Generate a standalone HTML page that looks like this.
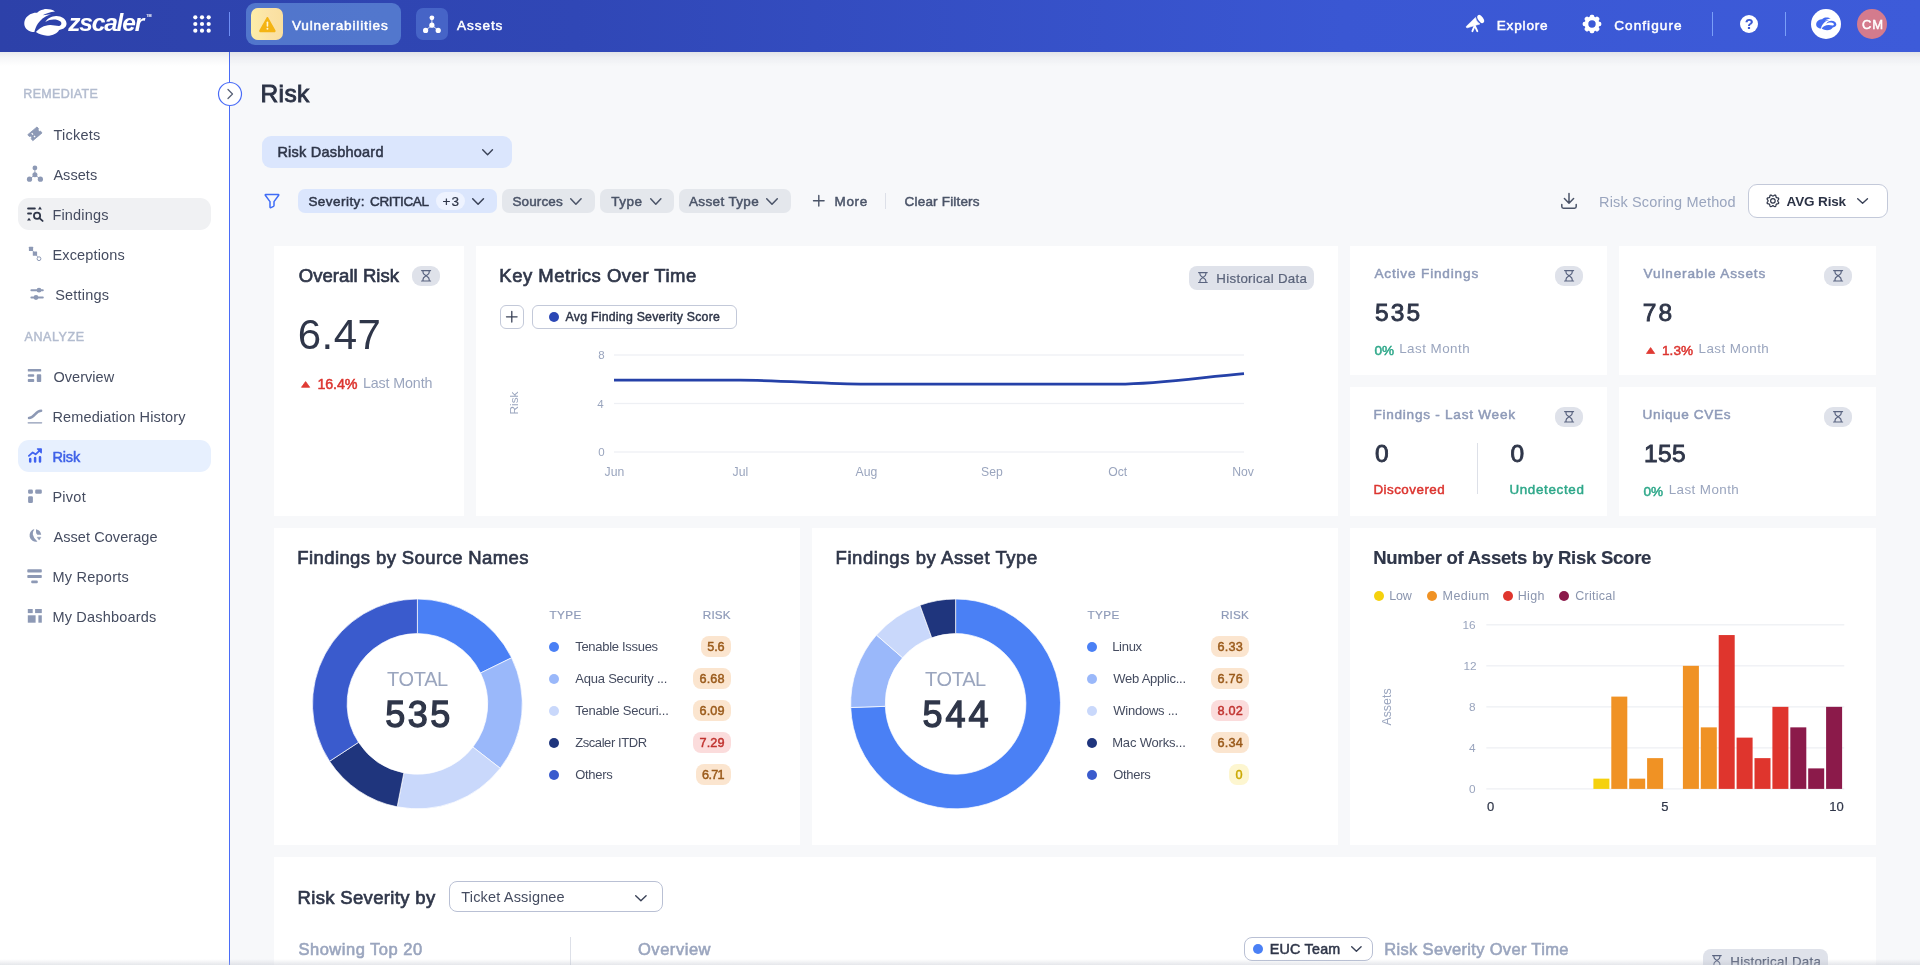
<!DOCTYPE html>
<html lang="en"><head><meta charset="utf-8"><title>Risk</title><style>
html,body{margin:0;padding:0}
body{width:1920px;height:965px;overflow:hidden;position:relative;background:#f7f8fa;font-family:"Liberation Sans", sans-serif;}
.t{position:absolute;white-space:nowrap;line-height:1}
.a{position:absolute}
svg{position:absolute;overflow:visible}
</style></head><body><div id="app" style="position:absolute;left:0;top:0;width:1920px;height:965px;will-change:transform;">
<div class="a" style="left:0px;top:52px;width:229px;height:913px;background:#ffffff;"></div>
<div class="a" style="left:229px;top:52px;width:1px;height:913px;background:#4a6cf7;"></div>
<div class="a" style="left:0;top:52px;width:1920px;height:14px;background:linear-gradient(to bottom,rgba(40,50,80,0.10),rgba(40,50,80,0.045) 40%,rgba(40,50,80,0));"></div>
<span class="t" style="left:23.30px;top:88.00px;font-size:12.5px;color:#b3bccf;font-weight:400;-webkit-text-stroke:0.45px currentColor;letter-spacing:0.318px;">REMEDIATE</span>
<div class="a" style="left:18px;top:198px;width:193px;height:32px;background:#f0f1f3;border-radius:11px;"></div>
<div class="a" style="left:18px;top:440px;width:193px;height:32px;background:#e7f0fe;border-radius:11px;"></div>
<span class="t" style="left:53.40px;top:128.00px;font-size:14.5px;color:#454c60;font-weight:400;letter-spacing:0.244px;">Tickets</span>
<span class="t" style="left:53.40px;top:168.00px;font-size:14.5px;color:#454c60;font-weight:400;letter-spacing:0.047px;">Assets</span>
<span class="t" style="left:52.40px;top:208.00px;font-size:14.5px;color:#454c60;font-weight:400;letter-spacing:0.178px;">Findings</span>
<span class="t" style="left:52.40px;top:248.00px;font-size:14.5px;color:#454c60;font-weight:400;letter-spacing:0.169px;">Exceptions</span>
<span class="t" style="left:55.20px;top:288.00px;font-size:14.5px;color:#454c60;font-weight:400;letter-spacing:0.194px;">Settings</span>
<span class="t" style="left:24.50px;top:331.00px;font-size:12.5px;color:#b3bccf;font-weight:400;-webkit-text-stroke:0.45px currentColor;letter-spacing:0.584px;">ANALYZE</span>
<span class="t" style="left:53.40px;top:370.00px;font-size:14.5px;color:#454c60;font-weight:400;letter-spacing:0.049px;">Overview</span>
<span class="t" style="left:52.40px;top:410.00px;font-size:14.5px;color:#454c60;font-weight:400;letter-spacing:0.144px;">Remediation History</span>
<span class="t" style="left:52.40px;top:490.00px;font-size:14.5px;color:#454c60;font-weight:400;letter-spacing:0.273px;">Pivot</span>
<span class="t" style="left:53.40px;top:530.00px;font-size:14.5px;color:#454c60;font-weight:400;letter-spacing:0.077px;">Asset Coverage</span>
<span class="t" style="left:52.40px;top:570.00px;font-size:14.5px;color:#454c60;font-weight:400;letter-spacing:0.247px;">My Reports</span>
<span class="t" style="left:52.40px;top:610.00px;font-size:14.5px;color:#454c60;font-weight:400;letter-spacing:0.201px;">My Dashboards</span>
<span class="t" style="left:52.40px;top:450.00px;font-size:14.5px;color:#3f62e8;font-weight:400;-webkit-text-stroke:0.52px currentColor;letter-spacing:-0.148px;">Risk</span>
<svg style="left:217px;top:81px;" width="26" height="26" viewBox="0 0 26 26"><circle cx="13" cy="13" r="11.5" fill="#fff" stroke="#4a6cf7" stroke-width="1.2"/><path d="M11 8.5 L15.5 13 L11 17.5" fill="none" stroke="#5a6378" stroke-width="1.3" stroke-linecap="round" stroke-linejoin="round"/></svg>
<div class="a" style="left:0;top:0;width:1920px;height:52px;background:linear-gradient(90deg,#2d41a9 0%,#3047b6 30%,#3a57d3 70%,#3d5bd9 100%);"></div>
<div class="a" style="left:246px;top:3px;width:155px;height:42px;background:rgba(112,160,228,0.55);border-radius:9px;"></div>
<div class="a" style="left:251px;top:8px;width:32px;height:32px;border-radius:7px;background:linear-gradient(90deg,#fdeea8,#fbe2a6 60%,#fadf9f);"></div>
<svg style="left:258.6px;top:15.5px;" width="16.8" height="16.8" viewBox="0 0 18 18"><path d="M9 1.8 L16.9 15.6 Q17.3 16.6 16.2 16.6 L1.8 16.6 Q0.7 16.6 1.1 15.6 Z" fill="#f4b414" stroke="#f4b414" stroke-width="1.6" stroke-linejoin="round"/><rect x="8.2" y="6" width="1.7" height="5.6" rx="0.8" fill="#fff6d8"/><circle cx="9.05" cy="13.7" r="1.05" fill="#fff6d8"/></svg>
<span class="t" style="left:291.90px;top:19.00px;font-size:13.6px;color:#ffffff;font-weight:400;-webkit-text-stroke:0.49px currentColor;letter-spacing:0.834px;">Vulnerabilities</span>
<div class="a" style="left:416px;top:8px;width:32px;height:32px;background:rgba(90,125,215,0.55);border-radius:7px;"></div>
<svg style="left:422px;top:14px;" width="20" height="20" viewBox="0 0 20 20"><g fill="#fff" stroke="#fff"><circle cx="9.9" cy="3.8" r="2.4" stroke="none"/><circle cx="9.9" cy="11.2" r="2.6" stroke="none"/><circle cx="3.6" cy="16.4" r="2.6" stroke="none"/><circle cx="16.2" cy="16.4" r="2.6" stroke="none"/><path d="M9.9 4 V11 M9.9 11.2 L3.8 16.2 M9.9 11.2 L16 16.2" stroke-width="0.8" fill="none"/></g></svg>
<span class="t" style="left:457.00px;top:19.00px;font-size:13.6px;color:#ffffff;font-weight:400;-webkit-text-stroke:0.49px currentColor;letter-spacing:0.920px;">Assets</span>
<svg style="left:193px;top:15px;" width="18" height="18" viewBox="0 0 18 18"><g fill="#fff"><circle cx="2.3" cy="2.3" r="2.1"/><circle cx="2.3" cy="9" r="2.1"/><circle cx="2.3" cy="15.7" r="2.1"/><circle cx="9" cy="2.3" r="2.1"/><circle cx="9" cy="9" r="2.1"/><circle cx="9" cy="15.7" r="2.1"/><circle cx="15.7" cy="2.3" r="2.1"/><circle cx="15.7" cy="9" r="2.1"/><circle cx="15.7" cy="15.7" r="2.1"/></g></svg>
<div class="a" style="left:229px;top:12px;width:1.4px;height:24px;background:#6f8ff5;"></div>
<svg style="left:23.7px;top:8.85px;" width="43" height="27" viewBox="0 0 43 27"><g fill="#fff"><path d="M31 2.4 C28 0.6 23 -0.4 19.5 0.4 C16.5 1 14.5 2.3 13.1 3.7 C9 3.2 4 5.5 1.6 9.5 C-0.6 13.5 0 18 3 20.5 C5.5 22.6 8 23.2 10.4 23.1 C11.5 17.5 15 11.5 20.5 8.2 C22.5 7 25 5.9 27.2 5.2 C24 5.4 21 5.8 18.7 6.3 C22 4.2 26 3 31 2.4 Z"/><path d="M11.9 23.1 C15 19 20 16.3 26.1 15.9 C29 15.8 32 16.8 35 17 C37.5 16.8 38 14 36.5 12.6 C34 10.2 29 10 25.4 11 C23.8 11.5 22.4 12.3 21.3 13.1 C23.5 9.5 27.5 7.2 32.1 7.1 C37.5 7 42 10 42.5 14.2 C42.8 17.5 40 20.2 35.1 20.9 C33.5 24 29 26.7 23.1 26.7 C19 26.6 15 25.3 11.9 23.1 Z"/></g></svg>
<span class="t" style="left:68.30px;top:11.00px;font-size:24.5px;color:#ffffff;font-weight:700;letter-spacing:-1.200px;font-style:italic;">zscaler</span>
<span class="t" style="left:146.30px;top:15.00px;font-size:3.6px;color:#ffffff;font-weight:400;-webkit-text-stroke:0.13px currentColor;">TM</span>
<svg style="left:0px;top:0px;" width="1920" height="965" viewBox="0 0 1920 965"><g fill="#fff" stroke="#fff"><ellipse cx="1480.7" cy="19" rx="2.5" ry="4.6" transform="rotate(-36 1480.7 19)" stroke="none"/><path d="M1475.5 17.4 Q1476.2 21.8 1479.9 24 L1467.3 27.8 Q1466.2 27.9 1466.2 26.6 Z" stroke-width="0.6" stroke-linejoin="round"/><path d="M1474.7 25.6 L1472.4 31.2 M1474.7 25.6 L1477.3 31.2" stroke-width="1.9" stroke-linecap="round" fill="none"/></g></svg>
<span class="t" style="left:1496.70px;top:19.00px;font-size:13.6px;color:#ffffff;font-weight:400;-webkit-text-stroke:0.49px currentColor;letter-spacing:0.811px;">Explore</span>
<svg style="left:1582px;top:14px;" width="20" height="20" viewBox="0 0 20 20"><g fill="#fff"><rect x="7.7" y="0.7" width="4.6" height="5" rx="1.7" transform="rotate(0 10 10)"/><rect x="7.7" y="0.7" width="4.6" height="5" rx="1.7" transform="rotate(45 10 10)"/><rect x="7.7" y="0.7" width="4.6" height="5" rx="1.7" transform="rotate(90 10 10)"/><rect x="7.7" y="0.7" width="4.6" height="5" rx="1.7" transform="rotate(135 10 10)"/><rect x="7.7" y="0.7" width="4.6" height="5" rx="1.7" transform="rotate(180 10 10)"/><rect x="7.7" y="0.7" width="4.6" height="5" rx="1.7" transform="rotate(225 10 10)"/><rect x="7.7" y="0.7" width="4.6" height="5" rx="1.7" transform="rotate(270 10 10)"/><rect x="7.7" y="0.7" width="4.6" height="5" rx="1.7" transform="rotate(315 10 10)"/><path fill-rule="evenodd" d="M10 2.6 A7.4 7.4 0 1 0 10 17.4 A7.4 7.4 0 1 0 10 2.6 Z M10 6.3 A3.7 3.7 0 1 1 10 13.7 A3.7 3.7 0 1 1 10 6.3 Z"/></g></svg>
<span class="t" style="left:1614.20px;top:19.00px;font-size:13.6px;color:#ffffff;font-weight:400;-webkit-text-stroke:0.49px currentColor;letter-spacing:1.052px;">Configure</span>
<div class="a" style="left:1711.9px;top:11.8px;width:1.3px;height:24.1px;background:#7a9ff8;"></div>
<div class="a" style="left:1784.8px;top:11.8px;width:1.3px;height:24.1px;background:#7a9ff8;"></div>
<div class="a" style="left:1740px;top:15px;width:18px;height:18px;border-radius:50%;background:#fff"></div>
<span class="t" style="left:1745.00px;top:17.00px;font-size:14px;color:#3a57d3;font-weight:700;-webkit-text-stroke:0.2px currentColor;">?</span>
<div class="a" style="left:1811px;top:9px;width:30px;height:30px;border-radius:50%;background:#fff"></div>
<svg style="left:1815.6px;top:16.9px;" width="20.6" height="13.8" viewBox="0 0 43 27"><g fill="#446bf0"><path d="M31 2.4 C28 0.6 23 -0.4 19.5 0.4 C16.5 1 14.5 2.3 13.1 3.7 C9 3.2 4 5.5 1.6 9.5 C-0.6 13.5 0 18 3 20.5 C5.5 22.6 8 23.2 10.4 23.1 C11.5 17.5 15 11.5 20.5 8.2 C22.5 7 25 5.9 27.2 5.2 C24 5.4 21 5.8 18.7 6.3 C22 4.2 26 3 31 2.4 Z"/><path d="M11.9 23.1 C15 19 20 16.3 26.1 15.9 C29 15.8 32 16.8 35 17 C37.5 16.8 38 14 36.5 12.6 C34 10.2 29 10 25.4 11 C23.8 11.5 22.4 12.3 21.3 13.1 C23.5 9.5 27.5 7.2 32.1 7.1 C37.5 7 42 10 42.5 14.2 C42.8 17.5 40 20.2 35.1 20.9 C33.5 24 29 26.7 23.1 26.7 C19 26.6 15 25.3 11.9 23.1 Z"/></g></svg>
<div class="a" style="left:1857px;top:9px;width:30px;height:30px;border-radius:50%;background:#d47b8d"></div>
<span class="t" style="left:1861.95px;top:18.00px;font-size:13px;color:#ffffff;font-weight:400;-webkit-text-stroke:0.47px currentColor;letter-spacing:0.912px;">CM</span>
<span class="t" style="left:260.50px;top:82.00px;font-size:24.5px;color:#2b3245;font-weight:400;-webkit-text-stroke:0.88px currentColor;letter-spacing:0.405px;">Risk</span>
<div class="a" style="left:262px;top:136px;width:250px;height:32px;background:#dbe6fd;border-radius:9px;"></div>
<span class="t" style="left:277.40px;top:145.00px;font-size:14.5px;color:#2f3649;font-weight:400;-webkit-text-stroke:0.52px currentColor;letter-spacing:0.224px;">Risk Dasbhoard</span>
<svg style="left:482.4px;top:148.8px;" width="11.2" height="6.4" viewBox="0 0 11.2 6.4"><path d="M0.7 0.7 L5.6 5.7 L10.5 0.7" fill="none" stroke="#3a4257" stroke-width="1.4" stroke-linecap="round" stroke-linejoin="round"/></svg>
<svg style="left:264px;top:193px;" width="16" height="16" viewBox="0 0 16 16"><path d="M1.6 1.6 H14.4 Q15 1.6 14.7 2.3 L10 8.6 V12.6 Q10 13.1 9.5 13.4 L7 14.6 Q6 14.9 6 14 V8.6 L1.3 2.3 Q1 1.6 1.6 1.6 Z" fill="none" stroke="#3f6cf6" stroke-width="1.5" stroke-linejoin="round"/></svg>
<div class="a" style="left:298px;top:189px;width:199px;height:24px;background:#dbe6fd;border-radius:7px;"></div>
<span class="t" style="left:308.40px;top:195.00px;font-size:13.5px;color:#2f3649;font-weight:400;-webkit-text-stroke:0.49px currentColor;letter-spacing:0.454px;">Severity:</span>
<span class="t" style="left:370.10px;top:195.00px;font-size:13.5px;color:#2f3649;font-weight:400;-webkit-text-stroke:0.49px currentColor;letter-spacing:-0.386px;">CRITICAL</span>
<div class="a" style="left:436px;top:192.3px;width:29px;height:17.4px;background:#eef3ff;border-radius:9px;"></div>
<span class="t" style="left:442.50px;top:195.00px;font-size:13.5px;color:#2f3649;font-weight:400;-webkit-text-stroke:0.22px currentColor;letter-spacing:1.116px;">+3</span>
<svg style="left:472px;top:198px;" width="12.2" height="7" viewBox="0 0 12.2 7"><path d="M0.7 0.7 L6.1 6.3 L11.5 0.7" fill="none" stroke="#3a4257" stroke-width="1.5" stroke-linecap="round" stroke-linejoin="round"/></svg>
<div class="a" style="left:502px;top:189px;width:93px;height:24px;background:#e4e7ec;border-radius:7px;"></div>
<span class="t" style="left:512.50px;top:195.00px;font-size:13.5px;color:#4b5468;font-weight:400;-webkit-text-stroke:0.49px currentColor;letter-spacing:0.104px;">Sources</span>
<svg style="left:570.4px;top:198px;" width="11.8" height="7" viewBox="0 0 11.8 7"><path d="M0.7 0.7 L5.9 6.3 L11.1 0.7" fill="none" stroke="#4b5468" stroke-width="1.5" stroke-linecap="round" stroke-linejoin="round"/></svg>
<div class="a" style="left:600px;top:189px;width:74px;height:24px;background:#e4e7ec;border-radius:7px;"></div>
<span class="t" style="left:611.20px;top:195.00px;font-size:13.5px;color:#4b5468;font-weight:400;-webkit-text-stroke:0.49px currentColor;letter-spacing:0.480px;">Type</span>
<svg style="left:649.5px;top:198px;" width="11.6" height="7" viewBox="0 0 11.6 7"><path d="M0.7 0.7 L5.8 6.3 L10.9 0.7" fill="none" stroke="#4b5468" stroke-width="1.5" stroke-linecap="round" stroke-linejoin="round"/></svg>
<div class="a" style="left:679px;top:189px;width:112px;height:24px;background:#e4e7ec;border-radius:7px;"></div>
<span class="t" style="left:688.90px;top:195.00px;font-size:13.5px;color:#4b5468;font-weight:400;-webkit-text-stroke:0.49px currentColor;letter-spacing:0.370px;">Asset Type</span>
<svg style="left:766.1px;top:198px;" width="12" height="7" viewBox="0 0 12 7"><path d="M0.7 0.7 L6 6.3 L11.3 0.7" fill="none" stroke="#4b5468" stroke-width="1.5" stroke-linecap="round" stroke-linejoin="round"/></svg>
<svg style="left:812.5px;top:195.2px;" width="11.6" height="11.6" viewBox="0 0 11.6 11.6"><path d="M5.8 0.5 V11.1 M0.5 5.8 H11.1" stroke="#4b5468" stroke-width="1.4" stroke-linecap="round"/></svg>
<span class="t" style="left:834.50px;top:195.00px;font-size:13.5px;color:#4b5468;font-weight:400;-webkit-text-stroke:0.49px currentColor;letter-spacing:0.650px;">More</span>
<div class="a" style="left:885px;top:193px;width:1px;height:16px;background:#dde0e8;"></div>
<span class="t" style="left:904.60px;top:195.00px;font-size:13.5px;color:#4b5468;font-weight:400;-webkit-text-stroke:0.49px currentColor;letter-spacing:0.182px;">Clear Filters</span>
<svg style="left:1561px;top:193px;" width="16" height="16" viewBox="0 0 16 16"><path d="M8 0.6 V10.2 M3.4 5.6 L8 10.3 L12.6 5.6 M0.8 11.6 V13.6 Q0.8 15.2 2.4 15.2 H13.6 Q15.2 15.2 15.2 13.6 V11.4" fill="none" stroke="#4b5468" stroke-width="1.5" stroke-linecap="round" stroke-linejoin="round"/></svg>
<span class="t" style="left:1599.00px;top:195.00px;font-size:14.5px;color:#9aa5be;font-weight:400;letter-spacing:0.160px;">Risk Scoring Method</span>
<div class="a" style="left:1748px;top:184px;width:140px;height:34px;background:#ffffff;border-radius:9px;border:1px solid #c3c9d9;box-sizing:border-box;"></div>
<svg style="left:0px;top:0px;" width="1920" height="965" viewBox="0 0 1920 965"><g fill="none" stroke="#2f3649" stroke-width="1.25" stroke-linejoin="round"><path d="M1777.68 200.85 L1777.77 201.17 L1778.00 201.52 L1778.29 201.92 L1778.56 202.37 L1778.70 202.82 L1778.65 203.23 L1778.39 203.56 L1777.97 203.78 L1777.47 203.91 L1776.98 203.98 L1776.57 204.07 L1776.28 204.23 L1776.12 204.52 L1776.03 204.93 L1775.96 205.42 L1775.83 205.92 L1775.61 206.34 L1775.28 206.60 L1774.87 206.65 L1774.42 206.51 L1773.97 206.24 L1773.57 205.95 L1773.22 205.72 L1772.90 205.63 L1772.58 205.72 L1772.23 205.95 L1771.83 206.24 L1771.38 206.51 L1770.93 206.65 L1770.52 206.60 L1770.19 206.34 L1769.97 205.92 L1769.84 205.42 L1769.77 204.93 L1769.68 204.52 L1769.52 204.23 L1769.23 204.07 L1768.82 203.98 L1768.33 203.91 L1767.83 203.78 L1767.41 203.56 L1767.15 203.23 L1767.10 202.82 L1767.24 202.37 L1767.51 201.92 L1767.80 201.52 L1768.03 201.17 L1768.12 200.85 L1768.03 200.53 L1767.80 200.18 L1767.51 199.78 L1767.24 199.33 L1767.10 198.88 L1767.15 198.47 L1767.41 198.14 L1767.83 197.92 L1768.33 197.79 L1768.82 197.72 L1769.23 197.63 L1769.52 197.47 L1769.68 197.18 L1769.77 196.77 L1769.84 196.28 L1769.97 195.78 L1770.19 195.36 L1770.52 195.10 L1770.93 195.05 L1771.38 195.19 L1771.83 195.46 L1772.23 195.75 L1772.58 195.98 L1772.90 196.07 L1773.22 195.98 L1773.57 195.75 L1773.97 195.46 L1774.42 195.19 L1774.87 195.05 L1775.28 195.10 L1775.61 195.36 L1775.83 195.78 L1775.96 196.28 L1776.03 196.77 L1776.12 197.18 L1776.28 197.47 L1776.57 197.63 L1776.98 197.72 L1777.47 197.79 L1777.97 197.92 L1778.39 198.14 L1778.65 198.47 L1778.70 198.88 L1778.56 199.33 L1778.29 199.78 L1778.00 200.18 L1777.77 200.53 Z"/><circle cx="1772.9" cy="200.85" r="2.3" stroke-width="1.2"/></g></svg>
<span class="t" style="left:1786.60px;top:195.00px;font-size:13.5px;color:#2b3245;font-weight:700;letter-spacing:-0.144px;">AVG Risk</span>
<svg style="left:1857.3px;top:198.4px;" width="11.2" height="6" viewBox="0 0 11.2 6"><path d="M0.7 0.7 L5.6 5.3 L10.5 0.7" fill="none" stroke="#3a4257" stroke-width="1.4" stroke-linecap="round" stroke-linejoin="round"/></svg>
<div class="a" style="left:274px;top:246px;width:190px;height:270px;background:#ffffff;"></div>
<div class="a" style="left:476px;top:246px;width:862px;height:270px;background:#ffffff;"></div>
<div class="a" style="left:1350px;top:246px;width:257px;height:129px;background:#ffffff;"></div>
<div class="a" style="left:1619px;top:246px;width:257px;height:129px;background:#ffffff;"></div>
<div class="a" style="left:1350px;top:387px;width:257px;height:129px;background:#ffffff;"></div>
<div class="a" style="left:1619px;top:387px;width:257px;height:129px;background:#ffffff;"></div>
<div class="a" style="left:274px;top:528px;width:526px;height:317px;background:#ffffff;"></div>
<div class="a" style="left:812px;top:528px;width:526px;height:317px;background:#ffffff;"></div>
<div class="a" style="left:1350px;top:528px;width:526px;height:317px;background:#ffffff;"></div>
<div class="a" style="left:274px;top:857px;width:1602px;height:120px;background:#ffffff;"></div>
<span class="t" style="left:298.80px;top:267.00px;font-size:18.5px;color:#2f3649;font-weight:400;-webkit-text-stroke:0.67px currentColor;letter-spacing:0.049px;">Overall Risk</span>
<div class="a" style="left:412px;top:266px;width:28px;height:20.2px;background:#dfe2ea;border-radius:9px;"></div>
<svg style="left:420.9px;top:269.9px;" width="10.2" height="11.6" viewBox="0 0 10.2 11.6"><g fill="none" stroke="#5a6480" stroke-width="1.2" stroke-linecap="round" stroke-linejoin="round"><path d="M0.6 0.6 H9.6 M0.6 11 H9.6 M2 0.6 V2.2 C2 4.4 4 4.8 5.1 5.8 C6.2 4.8 8.2 4.4 8.2 2.2 V0.6 M2 11 V9.4 C2 7.2 4 6.8 5.1 5.8 C6.2 6.8 8.2 7.2 8.2 9.4 V11"/></g></svg>
<span class="t" style="left:297.80px;top:314.00px;font-size:42px;color:#2f3649;font-weight:400;letter-spacing:0.405px;">6.47</span>
<svg style="left:301px;top:381px;" width="9.2" height="6.8" viewBox="0 0 9.2 6.8"><path d="M4.6 0.6 L8.7 6.3 H0.5 Z" fill="#e03a33" stroke="#e03a33" stroke-width="0.8" stroke-linejoin="round"/></svg>
<span class="t" style="left:317.50px;top:377.00px;font-size:14.3px;color:#dc3530;font-weight:400;-webkit-text-stroke:0.51px currentColor;letter-spacing:-0.156px;">16.4%</span>
<span class="t" style="left:363.00px;top:376.00px;font-size:14.3px;color:#9aa5be;font-weight:400;letter-spacing:-0.142px;">Last Month</span>
<span class="t" style="left:499.30px;top:267.00px;font-size:18.5px;color:#2f3649;font-weight:400;-webkit-text-stroke:0.67px currentColor;letter-spacing:0.493px;">Key Metrics Over Time</span>
<div class="a" style="left:1189px;top:266px;width:125px;height:24px;background:#dfe2ea;border-radius:8px;"></div>
<svg style="left:1198px;top:272.2px;" width="9.792" height="11.136" viewBox="0 0 10.2 11.6"><g fill="none" stroke="#5a6480" stroke-width="1.2" stroke-linecap="round" stroke-linejoin="round"><path d="M0.6 0.6 H9.6 M0.6 11 H9.6 M2 0.6 V2.2 C2 4.4 4 4.8 5.1 5.8 C6.2 4.8 8.2 4.4 8.2 2.2 V0.6 M2 11 V9.4 C2 7.2 4 6.8 5.1 5.8 C6.2 6.8 8.2 7.2 8.2 9.4 V11"/></g></svg>
<span class="t" style="left:1216.30px;top:272.00px;font-size:13.3px;color:#5a637a;font-weight:400;-webkit-text-stroke:0.21px currentColor;letter-spacing:0.296px;">Historical Data</span>
<div class="a" style="left:500.3px;top:305.3px;width:23.4px;height:23.4px;background:#ffffff;border-radius:6px;border:1px solid #c3c9d9;box-sizing:border-box;"></div>
<svg style="left:506.2px;top:311.2px;" width="11.6" height="11.6" viewBox="0 0 11.6 11.6"><path d="M5.8 0.5 V11.1 M0.5 5.8 H11.1" stroke="#3a4257" stroke-width="1.3" stroke-linecap="round"/></svg>
<div class="a" style="left:532.2px;top:305.3px;width:204.5px;height:23.4px;background:#ffffff;border-radius:6px;border:1px solid #c3c9d9;box-sizing:border-box;"></div>
<div class="a" style="left:548.8px;top:311.8px;width:10.4px;height:10.4px;border-radius:50%;background:#2b47b5"></div>
<span class="t" style="left:565.50px;top:311.00px;font-size:12.3px;color:#2f3649;font-weight:400;-webkit-text-stroke:0.44px currentColor;letter-spacing:0.250px;">Avg Finding Severity Score</span>
<svg style="left:0px;top:0px;pointer-events:none;" width="1920" height="965" viewBox="0 0 1920 965"><rect x="614" y="354.35" width="630" height="1.3" fill="#eef0f4"/><rect x="614" y="402.85" width="630" height="1.3" fill="#eef0f4"/><rect x="614" y="451.35" width="630" height="1.3" fill="#eef0f4"/><path d="M614.00 380.22 C656.00 380.22 698.00 380.22 740.00 380.22 C782.00 380.22 824.00 384.10 866.00 384.10 C908.00 384.10 950.00 384.10 992.00 384.10 C1034.00 384.10 1076.00 384.10 1118.00 384.10 C1160.00 384.10 1202.00 377.07 1244.00 373.55" fill="none" stroke="#2541a8" stroke-width="2.8" stroke-linejoin="round"/></svg>
<span class="t" style="left:598.20px;top:350.00px;font-size:11.5px;color:#9aa5be;font-weight:400;">8</span>
<span class="t" style="left:597.20px;top:399.00px;font-size:11.5px;color:#9aa5be;font-weight:400;">4</span>
<span class="t" style="left:598.20px;top:447.00px;font-size:11.5px;color:#9aa5be;font-weight:400;">0</span>
<span class="t" style="left:604.56px;top:466.00px;font-size:12.2px;color:#9aa5be;font-weight:400;">Jun</span>
<span class="t" style="left:732.56px;top:466.00px;font-size:12.2px;color:#9aa5be;font-weight:400;">Jul</span>
<span class="t" style="left:855.55px;top:466.00px;font-size:12.2px;color:#9aa5be;font-weight:400;">Aug</span>
<span class="t" style="left:981.05px;top:466.00px;font-size:12.2px;color:#9aa5be;font-weight:400;">Sep</span>
<span class="t" style="left:1108.21px;top:466.00px;font-size:12.2px;color:#9aa5be;font-weight:400;">Oct</span>
<span class="t" style="left:1232.21px;top:466.00px;font-size:12.2px;color:#9aa5be;font-weight:400;">Nov</span>
<span class="t" style="left:515px;top:403px;font-size:11.8px;color:#9aa5be;transform:translate(-50%,-50%) rotate(-90deg);">Risk</span>
<span class="t" style="left:1374.40px;top:267.00px;font-size:13.6px;color:#8e9ab8;font-weight:400;-webkit-text-stroke:0.49px currentColor;letter-spacing:0.830px;">Active Findings</span>
<div class="a" style="left:1555px;top:266px;width:28px;height:20.2px;background:#dfe2ea;border-radius:9px;"></div>
<svg style="left:1563.9px;top:269.9px;" width="10.2" height="11.6" viewBox="0 0 10.2 11.6"><g fill="none" stroke="#5a6480" stroke-width="1.2" stroke-linecap="round" stroke-linejoin="round"><path d="M0.6 0.6 H9.6 M0.6 11 H9.6 M2 0.6 V2.2 C2 4.4 4 4.8 5.1 5.8 C6.2 4.8 8.2 4.4 8.2 2.2 V0.6 M2 11 V9.4 C2 7.2 4 6.8 5.1 5.8 C6.2 6.8 8.2 7.2 8.2 9.4 V11"/></g></svg>
<span class="t" style="left:1374.90px;top:301.00px;font-size:24.5px;color:#2f3649;font-weight:400;-webkit-text-stroke:0.88px currentColor;letter-spacing:2.224px;">535</span>
<span class="t" style="left:1374.50px;top:344.00px;font-size:13.6px;color:#2fa88a;font-weight:400;-webkit-text-stroke:0.49px currentColor;letter-spacing:-0.060px;">0%</span>
<span class="t" style="left:1399.20px;top:342.00px;font-size:13.4px;color:#9aa5be;font-weight:400;letter-spacing:0.467px;">Last Month</span>
<span class="t" style="left:1643.60px;top:267.00px;font-size:13.6px;color:#8e9ab8;font-weight:400;-webkit-text-stroke:0.49px currentColor;letter-spacing:0.833px;">Vulnerable Assets</span>
<div class="a" style="left:1824px;top:266px;width:28px;height:20.2px;background:#dfe2ea;border-radius:9px;"></div>
<svg style="left:1832.9px;top:269.9px;" width="10.2" height="11.6" viewBox="0 0 10.2 11.6"><g fill="none" stroke="#5a6480" stroke-width="1.2" stroke-linecap="round" stroke-linejoin="round"><path d="M0.6 0.6 H9.6 M0.6 11 H9.6 M2 0.6 V2.2 C2 4.4 4 4.8 5.1 5.8 C6.2 4.8 8.2 4.4 8.2 2.2 V0.6 M2 11 V9.4 C2 7.2 4 6.8 5.1 5.8 C6.2 6.8 8.2 7.2 8.2 9.4 V11"/></g></svg>
<span class="t" style="left:1642.80px;top:301.00px;font-size:24.5px;color:#2f3649;font-weight:400;-webkit-text-stroke:0.88px currentColor;letter-spacing:1.974px;">78</span>
<svg style="left:1645.9px;top:347px;" width="9.2" height="7" viewBox="0 0 9.2 7"><path d="M4.6 0.6 L8.7 6.5 H0.5 Z" fill="#e03a33" stroke="#e03a33" stroke-width="0.8" stroke-linejoin="round"/></svg>
<span class="t" style="left:1662.00px;top:344.00px;font-size:13.6px;color:#dc3530;font-weight:400;-webkit-text-stroke:0.49px currentColor;letter-spacing:0.034px;">1.3%</span>
<span class="t" style="left:1698.60px;top:342.00px;font-size:13.4px;color:#9aa5be;font-weight:400;letter-spacing:0.433px;">Last Month</span>
<span class="t" style="left:1373.40px;top:408.00px;font-size:13.6px;color:#8e9ab8;font-weight:400;-webkit-text-stroke:0.49px currentColor;letter-spacing:0.745px;">Findings - Last Week</span>
<div class="a" style="left:1555px;top:407px;width:28px;height:20.2px;background:#dfe2ea;border-radius:9px;"></div>
<svg style="left:1563.9px;top:410.9px;" width="10.2" height="11.6" viewBox="0 0 10.2 11.6"><g fill="none" stroke="#5a6480" stroke-width="1.2" stroke-linecap="round" stroke-linejoin="round"><path d="M0.6 0.6 H9.6 M0.6 11 H9.6 M2 0.6 V2.2 C2 4.4 4 4.8 5.1 5.8 C6.2 4.8 8.2 4.4 8.2 2.2 V0.6 M2 11 V9.4 C2 7.2 4 6.8 5.1 5.8 C6.2 6.8 8.2 7.2 8.2 9.4 V11"/></g></svg>
<span class="t" style="left:1374.90px;top:442.00px;font-size:24.5px;color:#2f3649;font-weight:400;-webkit-text-stroke:0.88px currentColor;">0</span>
<div class="a" style="left:1477px;top:443px;width:1px;height:51px;background:#dde0e8;"></div>
<span class="t" style="left:1510.60px;top:442.00px;font-size:24.5px;color:#2f3649;font-weight:400;-webkit-text-stroke:0.88px currentColor;">0</span>
<span class="t" style="left:1373.40px;top:483.00px;font-size:13.4px;color:#dc3530;font-weight:400;-webkit-text-stroke:0.48px currentColor;letter-spacing:0.485px;">Discovered</span>
<span class="t" style="left:1509.40px;top:483.00px;font-size:13.4px;color:#2fa88a;font-weight:400;-webkit-text-stroke:0.48px currentColor;letter-spacing:0.673px;">Undetected</span>
<span class="t" style="left:1642.60px;top:408.00px;font-size:13.6px;color:#8e9ab8;font-weight:400;-webkit-text-stroke:0.49px currentColor;letter-spacing:0.629px;">Unique CVEs</span>
<div class="a" style="left:1824px;top:407px;width:28px;height:20.2px;background:#dfe2ea;border-radius:9px;"></div>
<svg style="left:1832.9px;top:410.9px;" width="10.2" height="11.6" viewBox="0 0 10.2 11.6"><g fill="none" stroke="#5a6480" stroke-width="1.2" stroke-linecap="round" stroke-linejoin="round"><path d="M0.6 0.6 H9.6 M0.6 11 H9.6 M2 0.6 V2.2 C2 4.4 4 4.8 5.1 5.8 C6.2 4.8 8.2 4.4 8.2 2.2 V0.6 M2 11 V9.4 C2 7.2 4 6.8 5.1 5.8 C6.2 6.8 8.2 7.2 8.2 9.4 V11"/></g></svg>
<span class="t" style="left:1644.00px;top:442.00px;font-size:24.5px;color:#2f3649;font-weight:400;-webkit-text-stroke:0.88px currentColor;letter-spacing:0.374px;">155</span>
<span class="t" style="left:1643.60px;top:485.00px;font-size:13.6px;color:#2fa88a;font-weight:400;-webkit-text-stroke:0.49px currentColor;letter-spacing:-0.060px;">0%</span>
<span class="t" style="left:1668.70px;top:483.00px;font-size:13.4px;color:#9aa5be;font-weight:400;letter-spacing:0.422px;">Last Month</span>
<span class="t" style="left:297.30px;top:549.00px;font-size:18.5px;color:#2f3649;font-weight:400;-webkit-text-stroke:0.67px currentColor;letter-spacing:0.398px;">Findings by Source Names</span>
<svg style="left:0px;top:0px;" width="1920" height="965" viewBox="0 0 1920 965"><path d="M417.40 599.00 A104.9 104.9 0 0 1 511.62 657.79 L480.54 673.00 A70.3 70.3 0 0 0 417.40 633.60 Z" fill="#4a80f5" stroke="#fff" stroke-width="0.7"/><path d="M511.62 657.79 A104.9 104.9 0 0 1 500.23 768.27 L472.91 747.04 A70.3 70.3 0 0 0 480.54 673.00 Z" fill="#9ab8fa" stroke="#fff" stroke-width="0.7"/><path d="M500.23 768.27 A104.9 104.9 0 0 1 397.20 806.84 L403.86 772.88 A70.3 70.3 0 0 0 472.91 747.04 Z" fill="#c9d8fb" stroke="#fff" stroke-width="0.7"/><path d="M397.20 806.84 A104.9 104.9 0 0 1 329.56 761.25 L358.54 742.33 A70.3 70.3 0 0 0 403.86 772.88 Z" fill="#1f357d" stroke="#fff" stroke-width="0.7"/><path d="M329.56 761.25 A104.9 104.9 0 0 1 417.40 599.00 L417.40 633.60 A70.3 70.3 0 0 0 358.54 742.33 Z" fill="#3a5bcd" stroke="#fff" stroke-width="0.7"/></svg>
<span class="t" style="left:387.10px;top:669.00px;font-size:20px;color:#9aa5be;font-weight:400;letter-spacing:-0.371px;">TOTAL</span>
<span class="t" style="left:385.25px;top:697.00px;font-size:36px;color:#2f3649;font-weight:400;-webkit-text-stroke:1.30px currentColor;letter-spacing:2.529px;">535</span>
<span class="t" style="left:549.60px;top:609.00px;font-size:11.7px;color:#8e9ab8;font-weight:400;-webkit-text-stroke:0.19px currentColor;letter-spacing:0.357px;">TYPE</span>
<span class="t" style="left:702.80px;top:609.00px;font-size:11.7px;color:#8e9ab8;font-weight:400;-webkit-text-stroke:0.19px currentColor;letter-spacing:0.172px;">RISK</span>
<div class="a" style="left:549px;top:641.7px;width:10px;height:10px;border-radius:50%;background:#4a80f5"></div>
<span class="t" style="left:575.20px;top:640.00px;font-size:13px;color:#454c60;font-weight:400;letter-spacing:-0.294px;">Tenable Issues</span>
<div class="a" style="left:701px;top:636.4px;width:29.8px;height:20.6px;background:#fbe5cf;border-radius:8px;"></div>
<span class="t" style="left:707.20px;top:641.00px;font-size:12.7px;color:#9a5a1a;font-weight:400;-webkit-text-stroke:0.46px currentColor;letter-spacing:-0.091px;">5.6</span>
<div class="a" style="left:549px;top:673.7px;width:10px;height:10px;border-radius:50%;background:#9ab8fa"></div>
<span class="t" style="left:575.20px;top:672.00px;font-size:13px;color:#454c60;font-weight:400;letter-spacing:-0.204px;">Aqua Security ...</span>
<div class="a" style="left:693.2px;top:668.4px;width:37.6px;height:20.6px;background:#fbe5cf;border-radius:8px;"></div>
<span class="t" style="left:699.40px;top:673.00px;font-size:12.7px;color:#9a5a1a;font-weight:400;-webkit-text-stroke:0.46px currentColor;letter-spacing:0.188px;">6.68</span>
<div class="a" style="left:549px;top:705.7px;width:10px;height:10px;border-radius:50%;background:#c9d8fb"></div>
<span class="t" style="left:575.20px;top:704.00px;font-size:13px;color:#454c60;font-weight:400;letter-spacing:-0.201px;">Tenable Securi...</span>
<div class="a" style="left:693.2px;top:700.4px;width:37.6px;height:20.6px;background:#fbe5cf;border-radius:8px;"></div>
<span class="t" style="left:699.40px;top:705.00px;font-size:12.7px;color:#9a5a1a;font-weight:400;-webkit-text-stroke:0.46px currentColor;letter-spacing:0.188px;">6.09</span>
<div class="a" style="left:549px;top:737.7px;width:10px;height:10px;border-radius:50%;background:#1f357d"></div>
<span class="t" style="left:575.20px;top:736.00px;font-size:13px;color:#454c60;font-weight:400;letter-spacing:-0.425px;">Zscaler ITDR</span>
<div class="a" style="left:693.2px;top:732.4px;width:37.6px;height:20.6px;background:#fbdcdc;border-radius:8px;"></div>
<span class="t" style="left:699.40px;top:737.00px;font-size:12.7px;color:#c0322f;font-weight:400;-webkit-text-stroke:0.46px currentColor;letter-spacing:0.188px;">7.29</span>
<div class="a" style="left:549px;top:769.7px;width:10px;height:10px;border-radius:50%;background:#3a5bcd"></div>
<span class="t" style="left:575.20px;top:768.00px;font-size:13px;color:#454c60;font-weight:400;letter-spacing:-0.303px;">Others</span>
<div class="a" style="left:695.9px;top:764.4px;width:34.9px;height:20.6px;background:#fbe5cf;border-radius:8px;"></div>
<span class="t" style="left:702.10px;top:769.00px;font-size:12.7px;color:#9a5a1a;font-weight:400;-webkit-text-stroke:0.46px currentColor;letter-spacing:-0.712px;">6.71</span>
<span class="t" style="left:835.60px;top:549.00px;font-size:18.5px;color:#2f3649;font-weight:400;-webkit-text-stroke:0.67px currentColor;letter-spacing:0.559px;">Findings by Asset Type</span>
<svg style="left:0px;top:0px;" width="1920" height="965" viewBox="0 0 1920 965"><path d="M955.60 599.00 A104.9 104.9 0 1 1 850.76 707.53 L885.34 706.34 A70.3 70.3 0 1 0 955.60 633.60 Z" fill="#4a80f5" stroke="#fff" stroke-width="0.7"/><path d="M850.76 707.53 A104.9 104.9 0 0 1 876.47 635.04 L902.57 657.75 A70.3 70.3 0 0 0 885.34 706.34 Z" fill="#9ab8fa" stroke="#fff" stroke-width="0.7"/><path d="M876.47 635.04 A104.9 104.9 0 0 1 919.98 605.23 L931.73 637.78 A70.3 70.3 0 0 0 902.57 657.75 Z" fill="#c9d8fb" stroke="#fff" stroke-width="0.7"/><path d="M919.98 605.23 A104.9 104.9 0 0 1 955.60 599.00 L955.60 633.60 A70.3 70.3 0 0 0 931.73 637.78 Z" fill="#1f357d" stroke="#fff" stroke-width="0.7"/></svg>
<span class="t" style="left:925.10px;top:669.00px;font-size:20px;color:#9aa5be;font-weight:400;letter-spacing:-0.371px;">TOTAL</span>
<span class="t" style="left:922.58px;top:697.00px;font-size:36px;color:#2f3649;font-weight:400;-webkit-text-stroke:1.30px currentColor;letter-spacing:3.000px;">544</span>
<span class="t" style="left:1087.60px;top:609.00px;font-size:11.7px;color:#8e9ab8;font-weight:400;-webkit-text-stroke:0.19px currentColor;letter-spacing:0.357px;">TYPE</span>
<span class="t" style="left:1220.90px;top:609.00px;font-size:11.7px;color:#8e9ab8;font-weight:400;-webkit-text-stroke:0.19px currentColor;letter-spacing:0.172px;">RISK</span>
<div class="a" style="left:1087px;top:641.7px;width:10px;height:10px;border-radius:50%;background:#4a80f5"></div>
<span class="t" style="left:1112.20px;top:640.00px;font-size:13px;color:#454c60;font-weight:400;letter-spacing:-0.295px;">Linux</span>
<div class="a" style="left:1211.3px;top:636.4px;width:37.6px;height:20.6px;background:#fbe5cf;border-radius:8px;"></div>
<span class="t" style="left:1217.50px;top:641.00px;font-size:12.7px;color:#9a5a1a;font-weight:400;-webkit-text-stroke:0.46px currentColor;letter-spacing:0.188px;">6.33</span>
<div class="a" style="left:1087px;top:673.7px;width:10px;height:10px;border-radius:50%;background:#9ab8fa"></div>
<span class="t" style="left:1113.20px;top:672.00px;font-size:13px;color:#454c60;font-weight:400;letter-spacing:-0.228px;">Web Applic...</span>
<div class="a" style="left:1211.3px;top:668.4px;width:37.6px;height:20.6px;background:#fbe5cf;border-radius:8px;"></div>
<span class="t" style="left:1217.50px;top:673.00px;font-size:12.7px;color:#9a5a1a;font-weight:400;-webkit-text-stroke:0.46px currentColor;letter-spacing:0.188px;">6.76</span>
<div class="a" style="left:1087px;top:705.7px;width:10px;height:10px;border-radius:50%;background:#c9d8fb"></div>
<span class="t" style="left:1113.20px;top:704.00px;font-size:13px;color:#454c60;font-weight:400;letter-spacing:-0.227px;">Windows ...</span>
<div class="a" style="left:1211.3px;top:700.4px;width:37.6px;height:20.6px;background:#fbdcdc;border-radius:8px;"></div>
<span class="t" style="left:1217.50px;top:705.00px;font-size:12.7px;color:#c0322f;font-weight:400;-webkit-text-stroke:0.46px currentColor;letter-spacing:0.188px;">8.02</span>
<div class="a" style="left:1087px;top:737.7px;width:10px;height:10px;border-radius:50%;background:#1f357d"></div>
<span class="t" style="left:1112.20px;top:736.00px;font-size:13px;color:#454c60;font-weight:400;letter-spacing:-0.181px;">Mac Works...</span>
<div class="a" style="left:1211.3px;top:732.4px;width:37.6px;height:20.6px;background:#fbe5cf;border-radius:8px;"></div>
<span class="t" style="left:1217.50px;top:737.00px;font-size:12.7px;color:#9a5a1a;font-weight:400;-webkit-text-stroke:0.46px currentColor;letter-spacing:0.188px;">6.34</span>
<div class="a" style="left:1087px;top:769.7px;width:10px;height:10px;border-radius:50%;background:#3a5bcd"></div>
<span class="t" style="left:1113.20px;top:768.00px;font-size:13px;color:#454c60;font-weight:400;letter-spacing:-0.303px;">Others</span>
<div class="a" style="left:1229px;top:764.4px;width:19.9px;height:20.6px;background:#fdf6d0;border-radius:8px;"></div>
<span class="t" style="left:1235.45px;top:769.00px;font-size:12.7px;color:#c9a800;font-weight:400;-webkit-text-stroke:0.46px currentColor;">0</span>
<span class="t" style="left:1373.20px;top:549.00px;font-size:18.5px;color:#2f3649;font-weight:700;-webkit-text-stroke:0.2px currentColor;letter-spacing:-0.239px;">Number of Assets by Risk Score</span>
<div class="a" style="left:1374px;top:591px;width:10px;height:10px;border-radius:50%;background:#f5d10d"></div>
<span class="t" style="left:1389.30px;top:590.00px;font-size:12.5px;color:#8a95ae;font-weight:400;letter-spacing:-0.202px;">Low</span>
<div class="a" style="left:1427.1px;top:591px;width:10px;height:10px;border-radius:50%;background:#f09224"></div>
<span class="t" style="left:1442.60px;top:590.00px;font-size:12.5px;color:#8a95ae;font-weight:400;letter-spacing:0.411px;">Medium</span>
<div class="a" style="left:1503px;top:591px;width:10px;height:10px;border-radius:50%;background:#df352d"></div>
<span class="t" style="left:1517.80px;top:590.00px;font-size:12.5px;color:#8a95ae;font-weight:400;letter-spacing:0.281px;">High</span>
<div class="a" style="left:1558.8px;top:591px;width:10px;height:10px;border-radius:50%;background:#8b1a4a"></div>
<span class="t" style="left:1575.20px;top:590.00px;font-size:12.5px;color:#8a95ae;font-weight:400;letter-spacing:0.269px;">Critical</span>
<svg style="left:0px;top:0px;" width="1920" height="965" viewBox="0 0 1920 965"><rect x="1486.3" y="788.25" width="358" height="1.3" fill="#eef0f4"/><rect x="1486.3" y="747.23" width="358" height="1.3" fill="#eef0f4"/><rect x="1486.3" y="706.20" width="358" height="1.3" fill="#eef0f4"/><rect x="1486.3" y="665.18" width="358" height="1.3" fill="#eef0f4"/><rect x="1486.3" y="624.15" width="358" height="1.3" fill="#eef0f4"/><rect x="1593.40" y="778.64" width="16" height="10.26" fill="#f5d10d"/><rect x="1611.30" y="696.60" width="16" height="92.30" fill="#f09224"/><rect x="1629.20" y="778.64" width="16" height="10.26" fill="#f09224"/><rect x="1647.10" y="758.13" width="16" height="30.77" fill="#f09224"/><rect x="1682.90" y="665.83" width="16" height="123.07" fill="#f09224"/><rect x="1700.80" y="727.36" width="16" height="61.54" fill="#f09224"/><rect x="1718.70" y="635.06" width="16" height="153.84" fill="#df352d"/><rect x="1736.60" y="737.62" width="16" height="51.28" fill="#df352d"/><rect x="1754.50" y="758.13" width="16" height="30.77" fill="#df352d"/><rect x="1772.40" y="706.85" width="16" height="82.05" fill="#df352d"/><rect x="1790.30" y="727.36" width="16" height="61.54" fill="#8b1a4a"/><rect x="1808.20" y="768.39" width="16" height="20.51" fill="#8b1a4a"/><rect x="1826.10" y="706.85" width="16" height="82.05" fill="#8b1a4a"/></svg>
<span class="t" style="left:1469.00px;top:784.00px;font-size:11.8px;color:#9aa5be;font-weight:400;">0</span>
<span class="t" style="left:1469.00px;top:743.00px;font-size:11.8px;color:#9aa5be;font-weight:400;">4</span>
<span class="t" style="left:1469.00px;top:702.00px;font-size:11.8px;color:#9aa5be;font-weight:400;">8</span>
<span class="t" style="left:1463.44px;top:661.00px;font-size:11.8px;color:#9aa5be;font-weight:400;">12</span>
<span class="t" style="left:1462.44px;top:620.00px;font-size:11.8px;color:#9aa5be;font-weight:400;">16</span>
<span class="t" style="left:1486.90px;top:800.00px;font-size:13px;color:#2f3649;font-weight:400;-webkit-text-stroke:0.21px currentColor;">0</span>
<span class="t" style="left:1661.30px;top:800.00px;font-size:13px;color:#2f3649;font-weight:400;-webkit-text-stroke:0.21px currentColor;">5</span>
<span class="t" style="left:1829.29px;top:800.00px;font-size:13px;color:#2f3649;font-weight:400;-webkit-text-stroke:0.21px currentColor;">10</span>
<span class="t" style="left:1387px;top:707px;font-size:12.4px;color:#9aa5be;transform:translate(-50%,-50%) rotate(-90deg);">Assets</span>
<span class="t" style="left:297.50px;top:889.00px;font-size:18.5px;color:#2f3649;font-weight:400;-webkit-text-stroke:0.67px currentColor;letter-spacing:0.336px;">Risk Severity by</span>
<div class="a" style="left:449px;top:881.3px;width:213.5px;height:31.2px;background:#ffffff;border-radius:8px;border:1px solid #b9c0d4;box-sizing:border-box;"></div>
<span class="t" style="left:461.30px;top:890.00px;font-size:14.5px;color:#454c60;font-weight:400;letter-spacing:0.168px;">Ticket Assignee</span>
<svg style="left:635.4px;top:894.5px;" width="11.8" height="6.4" viewBox="0 0 11.8 6.4"><path d="M0.7 0.7 L5.9 5.7 L11.1 0.7" fill="none" stroke="#3a4257" stroke-width="1.4" stroke-linecap="round" stroke-linejoin="round"/></svg>
<span class="t" style="left:298.50px;top:941.00px;font-size:16.5px;color:#9aa5be;font-weight:400;-webkit-text-stroke:0.59px currentColor;letter-spacing:0.505px;">Showing Top 20</span>
<div class="a" style="left:570px;top:937px;width:1px;height:30px;background:#dde0e8;"></div>
<span class="t" style="left:638.00px;top:941.00px;font-size:16.5px;color:#9aa5be;font-weight:400;-webkit-text-stroke:0.59px currentColor;letter-spacing:0.536px;">Overview</span>
<div class="a" style="left:1244px;top:937.2px;width:128.5px;height:23.6px;background:#ffffff;border-radius:8px;border:1px solid #b9c0d4;box-sizing:border-box;"></div>
<div class="a" style="left:1253px;top:943.7px;width:10.2px;height:10.2px;border-radius:50%;background:#4a80f5"></div>
<span class="t" style="left:1269.80px;top:942.00px;font-size:14.3px;color:#2f3649;font-weight:400;-webkit-text-stroke:0.51px currentColor;letter-spacing:0.227px;">EUC Team</span>
<svg style="left:1350.7px;top:945.8px;" width="10.8" height="6" viewBox="0 0 10.8 6"><path d="M0.7 0.7 L5.4 5.3 L10.1 0.7" fill="none" stroke="#3a4257" stroke-width="1.4" stroke-linecap="round" stroke-linejoin="round"/></svg>
<span class="t" style="left:1384.30px;top:941.00px;font-size:16.5px;color:#9aa5be;font-weight:400;-webkit-text-stroke:0.59px currentColor;letter-spacing:0.324px;">Risk Severity Over Time</span>
<div class="a" style="left:1703px;top:948.8px;width:125px;height:24px;background:#dfe2ea;border-radius:8px;"></div>
<svg style="left:1712px;top:955px;" width="9.792" height="11.136" viewBox="0 0 10.2 11.6"><g fill="none" stroke="#5a6480" stroke-width="1.2" stroke-linecap="round" stroke-linejoin="round"><path d="M0.6 0.6 H9.6 M0.6 11 H9.6 M2 0.6 V2.2 C2 4.4 4 4.8 5.1 5.8 C6.2 4.8 8.2 4.4 8.2 2.2 V0.6 M2 11 V9.4 C2 7.2 4 6.8 5.1 5.8 C6.2 6.8 8.2 7.2 8.2 9.4 V11"/></g></svg>
<span class="t" style="left:1730.30px;top:955.00px;font-size:13.3px;color:#5a637a;font-weight:400;-webkit-text-stroke:0.21px currentColor;letter-spacing:0.296px;">Historical Data</span>
<div class="a" style="left:0;top:959px;width:1920px;height:6px;background:linear-gradient(to bottom,rgba(190,194,204,0),rgba(190,194,204,0.4));"></div>
<svg style="left:0px;top:0px;" width="1920" height="965" viewBox="0 0 1920 965"><g transform="translate(34.9 133.8) rotate(-40)"><path d="M-6 -3.9 H6 V-1.4 A1.4 1.4 0 0 0 6 1.4 V3.9 H-6 V1.4 A1.4 1.4 0 0 0 -6 -1.4 Z" fill="#8d99b5" stroke="#8d99b5" stroke-width="0.8" stroke-linejoin="round"/><path d="M-2 -2.6 V-0.5 M-2 0.9 V2.8" stroke="#fff" stroke-width="1.2"/></g></svg>
<svg style="left:0px;top:0px;" width="1920" height="965" viewBox="0 0 1920 965"><g fill="#8d99b5" stroke="#8d99b5"><path d="M34.9 168 V174.8 L29.4 179.2 M34.9 174.8 L40.5 179.2" fill="none" stroke-width="0.9"/><circle cx="34.9" cy="167.9" r="2.4" stroke="none"/><circle cx="34.9" cy="174.8" r="2.5" stroke="none"/><circle cx="29.5" cy="179.2" r="2.6" stroke="none"/><circle cx="40.4" cy="179.2" r="2.6" stroke="none"/></g></svg>
<svg style="left:0px;top:0px;" width="1920" height="965" viewBox="0 0 1920 965"><g fill="#2f3649"><rect x="27.1" y="207.5" width="8.7" height="2" rx="1"/><rect x="27.1" y="212.4" width="4.9" height="2.1" rx="1"/><path d="M39.95 206.6 L41.9 209.5 H38 Z"/><path d="M29 217.8 L31 220.5 H27 Z"/><circle cx="37.05" cy="215.7" r="3.1" fill="none" stroke="#2f3649" stroke-width="1.8"/><path d="M39.4 218.1 L42.6 220.9" stroke="#2f3649" stroke-width="1.9" stroke-linecap="round"/></g></svg>
<svg style="left:0px;top:0px;" width="1920" height="965" viewBox="0 0 1920 965"><g fill="#8d99b5"><rect x="28.9" y="246.7" width="4.2" height="4.2" rx="0.5"/><rect x="32.8" y="251.6" width="4.3" height="4.2" rx="0.5"/><path d="M32.6 250.6 L33.6 251.9 M36.6 255.4 L37.6 256.8" stroke="#8d99b5" stroke-width="0.9"/><circle cx="39" cy="258.7" r="1.9" fill="none" stroke="#8d99b5" stroke-width="1"/></g></svg>
<svg style="left:0px;top:0px;" width="1920" height="965" viewBox="0 0 1920 965"><g fill="#8d99b5"><rect x="30.4" y="289.2" width="13.4" height="2" rx="1"/><rect x="30.4" y="296.5" width="13.4" height="2" rx="1"/><circle cx="39" cy="290.2" r="2.4"/><circle cx="36" cy="297.5" r="2.4"/></g></svg>
<svg style="left:0px;top:0px;" width="1920" height="965" viewBox="0 0 1920 965"><g fill="#8d99b5"><rect x="27.8" y="369.1" width="13.4" height="2.5" rx="0.6"/><rect x="27.8" y="374.2" width="6.4" height="2.6" rx="0.8"/><rect x="27.8" y="379" width="6.4" height="3.1" rx="0.8"/><rect x="36.8" y="374.2" width="4.4" height="7.9" rx="0.8"/></g></svg>
<svg style="left:0px;top:0px;" width="1920" height="965" viewBox="0 0 1920 965"><g fill="none" stroke="#8d99b5" stroke-linecap="round"><path d="M29 417.9 C34.6 417.9 35.4 410.7 41.1 410.7" stroke-width="2.5"/><path d="M28.2 422.8 H41.6" stroke-width="1.3"/></g></svg>
<svg style="left:0px;top:0px;" width="1920" height="965" viewBox="0 0 1920 965"><g fill="none" stroke="#3f62f0" stroke-linecap="round" stroke-linejoin="round"><path d="M28.9 455.8 L32.7 452.4 L35.6 454.3 L40.6 449.6" stroke-width="1.8"/><path d="M37.4 448.9 H41.3 V452.8 Z" stroke-width="1.2" fill="#3f62f0"/><path d="M30.2 459 V461.5 M35.1 457.9 V461.5 M40 457.3 V461.5" stroke-width="2.5"/></g></svg>
<svg style="left:0px;top:0px;" width="1920" height="965" viewBox="0 0 1920 965"><g fill="#8d99b5"><rect x="28.1" y="489.4" width="4.8" height="4.4" rx="1.3"/><rect x="35.2" y="489.4" width="6.6" height="4.4" rx="1.3"/><rect x="28.1" y="496.3" width="4.8" height="6.7" rx="1.3"/></g></svg>
<svg style="left:0px;top:0px;" width="1920" height="965" viewBox="0 0 1920 965"><g fill="#8d99b5"><path d="M34.4 529.1 A6.4 6.4 0 1 0 37.4 541.6 Q33.4 538 32.8 534.6 Q32.6 532 34.4 529.1 Z"/><path d="M36 529.2 A6.5 6.5 0 0 1 41.2 534.7 L37.4 534.7 Q36 533.6 36 532 Z"/><path d="M37.1 537.2 H41 L39.1 540.1 Z" stroke="#8d99b5" stroke-width="0.4" stroke-linejoin="round"/></g></svg>
<svg style="left:0px;top:0px;" width="1920" height="965" viewBox="0 0 1920 965"><g fill="#8d99b5"><rect x="27.3" y="569.3" width="14.5" height="3.2" rx="0.8"/><rect x="27.3" y="575" width="14.5" height="3" rx="0.8"/><rect x="31.2" y="580.4" width="6.6" height="2.9" rx="1"/></g></svg>
<svg style="left:0px;top:0px;" width="1920" height="965" viewBox="0 0 1920 965"><g fill="#8d99b5"><rect x="27.8" y="609" width="4.9" height="4.1"/><rect x="35.1" y="609" width="6.7" height="4.1"/><rect x="27.8" y="615.3" width="7.8" height="7.4"/><rect x="38.4" y="615.3" width="3.4" height="7.4"/></g></svg>
</div></body></html>
